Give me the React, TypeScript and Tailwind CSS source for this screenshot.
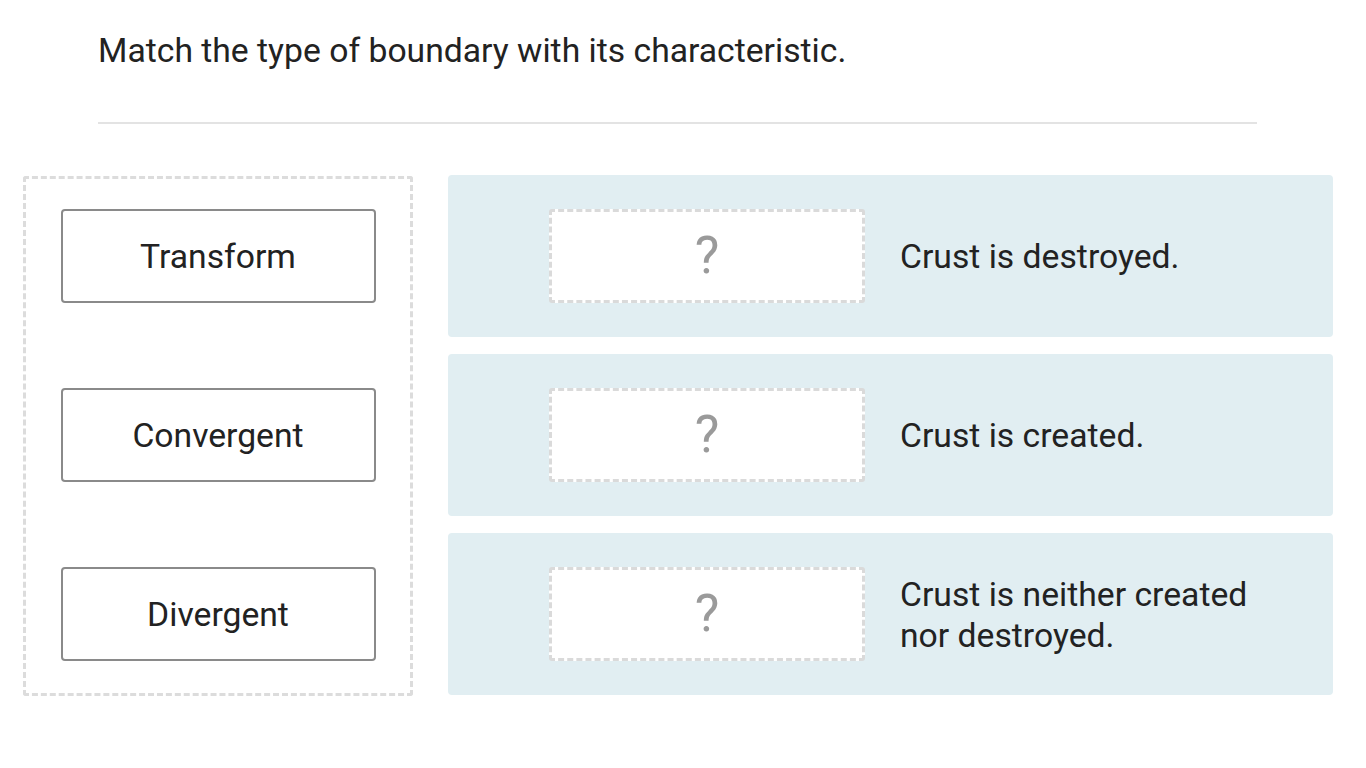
export default function App() {
  const items = ['Transform', 'Convergent', 'Divergent'];
  const targets = [
    'Crust is destroyed.',
    'Crust is created.',
    'Crust is neither created nor destroyed.',
  ];

  return (
    <div className="min-h-screen w-full bg-white text-[#222] font-['Roboto','Liberation_Sans',sans-serif]">
      <div className="pl-[98px] pt-[27px] w-[1257px]">
        <h1 className="text-[33.7px] leading-[48px] font-normal">
          Match the type of boundary with its characteristic.
        </h1>
        <div className="mt-[47px] h-[2px] bg-[#e3e3e3]" />
      </div>

      <div className="flex gap-[35px] pl-[23px] mt-[51px]">
        <div className="w-[390px] h-[520px] mt-[1px] border-[3px] border-dashed border-[#dcdcdc] rounded-[3px] flex flex-col items-center pt-[30px] gap-[85px]">
          {items.map((t) => (
            <div
              key={t}
              className="w-[315px] h-[94px] border-2 border-[#8a8a8a] rounded-[4px] bg-white flex items-center justify-center text-[33.7px] pt-[2px]"
            >
              {t}
            </div>
          ))}
        </div>

        <div className="w-[885px] flex flex-col gap-[17px]">
          {targets.map((t) => (
            <div
              key={t}
              className="h-[162px] bg-[#e1eef2] rounded-[4px] flex items-center pl-[101px]"
            >
              <div className="w-[316px] h-[94px] shrink-0 border-[3px] border-dashed border-[#dadada] bg-white rounded-[3px] flex items-center justify-center text-[52px] leading-none text-[#9a9a9a]">
                ?
              </div>
              <div className="ml-[35px] w-[380px] text-[33.7px] leading-[41px] pt-[1px]">{t}</div>
            </div>
          ))}
        </div>
      </div>
    </div>
  );
}
